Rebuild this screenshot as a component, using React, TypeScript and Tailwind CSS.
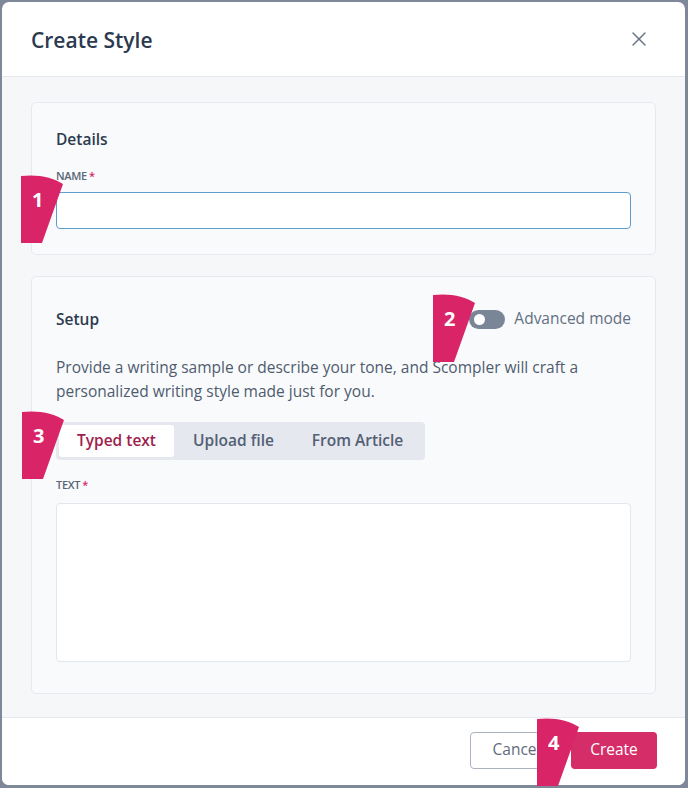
import { X } from 'lucide-react';

const FONT = { fontFamily: '"Open Sans", "Noto Sans", sans-serif' };

// pink numbered marker used as a walkthrough annotation
function Marker({ n, className }: { n: number; className: string }) {
  return (
    <div className={`absolute w-[42px] h-[68px] ${className}`}>
      <svg width="42" height="68" viewBox="0 0 42 68" className="absolute inset-0">
        <path d="M0 1 C 16 -1, 32 2, 42 9 L 21 68 L 0 68 Z" fill="#d92567" />
      </svg>
      <span className="absolute left-[11px] top-[10px] text-[20px] font-bold leading-[30px] text-white">{n}</span>
    </div>
  );
}

function Label({ children }: { children: string }) {
  return (
    <div className="text-[11px] font-semibold uppercase tracking-[-0.3px] text-[#5a6678] leading-4">
      {children}
      <span className="ml-[2px] text-[#d92567]">*</span>
    </div>
  );
}

export default function App() {
  return (
    <div style={FONT} className="w-[688px] h-[788px] bg-[#7e8899] pt-[2px] pl-[2px] pr-[3px] pb-[3px] relative overflow-hidden">
      <div className="h-full bg-white rounded-[7px] overflow-hidden flex flex-col">
        {/* header */}
        <div className="h-[75px] shrink-0 flex items-center justify-between pl-[29px] pr-[34px] pt-[3px] border-b border-[#e5e8ee]">
          <h1 className="text-[21px] font-semibold text-[#2c3a4f]">Create Style</h1>
          <X className="size-[24px] text-[#6b7688] -mt-[3px]" strokeWidth={1.5} />
        </div>

        {/* body */}
        <div className="flex-1 bg-[#f6f7f9] px-[29px] pt-[25px] flex flex-col gap-[21px]">
          <div className="bg-[#f9fafb] border border-[#e6e9ef] rounded-[5px] px-[24px] pt-[24px] pb-[24px] h-[153px]">
            <h2 className="text-[15.5px] font-semibold text-[#2c3a4f] leading-6">Details</h2>
            <div className="mt-[17px]">
              <Label>NAME</Label>
            </div>
            <div className="mt-[8px] h-[37px] bg-white border border-[#5d9dcc] rounded-[4px]" />
          </div>

          <div className="bg-[#f9fafb] border border-[#e6e9ef] rounded-[5px] px-[24px] pt-[30px] h-[418px]">
            <div className="flex items-center justify-between">
              <h2 className="text-[15.5px] font-semibold text-[#2c3a4f] leading-6">Setup</h2>
              <div className="flex items-center gap-[9px]">
                <div className="w-[36px] h-[19px] rounded-full bg-[#7a8597] flex items-center pl-[5px]">
                  <div className="size-[11px] rounded-full bg-white" />
                </div>
                <span className="text-[15.5px] text-[#637083]">Advanced mode</span>
              </div>
            </div>
            <p className="mt-[24px] text-[15.5px] leading-6 text-[#4f5c6f]">
              Provide a writing sample or describe your tone, and Scompler will craft a personalized writing style made
              just for you.
            </p>
            <div className="mt-[19px] inline-flex items-center h-[38px] bg-[#e5e8ee] rounded-[4px] px-[3px]">
              <div className="h-[32px] w-[115px] bg-white rounded-[3px] flex items-center justify-center text-[15.5px] font-semibold text-[#9e1f4d]">
                Typed text
              </div>
              <div className="h-[32px] w-[119px] flex items-center justify-center text-[15.5px] font-semibold text-[#536074]">
                Upload file
              </div>
              <div className="h-[32px] w-[129px] flex items-center justify-center text-[15.5px] font-semibold text-[#536074]">
                From Article
              </div>
            </div>
            <div className="mt-[17px]">
              <Label>TEXT</Label>
            </div>
            <div className="mt-[10px] h-[159px] bg-white border border-[#e3e7ed] rounded-[4px]" />
          </div>
        </div>

        {/* footer */}
        <div className="h-[68px] shrink-0 bg-white border-t border-[#e5e8ee] flex items-center justify-end gap-[8px] pr-[28px] pb-[3px]">
          <button className="h-[37px] w-[93px] border border-[#aab3c0] rounded-[4px] text-[15.5px] text-[#5f6b7c] bg-white">
            Cancel
          </button>
          <button className="h-[37px] w-[86px] rounded-[4px] text-[15.5px] text-white bg-[#d52d68]">Create</button>
        </div>
      </div>

      <Marker n={1} className="left-[21px] top-[175px]" />
      <Marker n={2} className="left-[433px] top-[294px]" />
      <Marker n={3} className="left-[22px] top-[411px]" />
      <Marker n={4} className="left-[537px] top-[718px]" />
    </div>
  );
}
